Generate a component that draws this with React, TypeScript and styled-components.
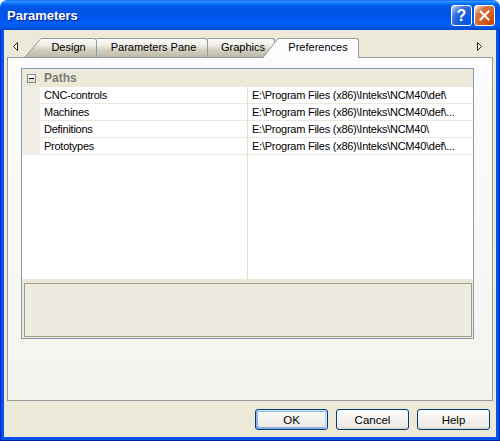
import React from 'react';
import styled, { createGlobalStyle } from 'styled-components';

const GlobalStyle = createGlobalStyle`
  html, body { margin: 0; padding: 0; background: #ffffff; }
  body { font-family: "Liberation Sans", Arial, sans-serif; font-size: 11px; color: #000; }
  * { box-sizing: border-box; }
`;

const Window = styled.div`
  width: 500px;
  height: 441px;
  display: flex;
  flex-direction: column;
`;

const TitleBar = styled.div`
  height: 30px;
  flex: none;
  display: flex;
  align-items: flex-start;
  padding: 5px 5px 0 7px;
  border-radius: 7px 7px 0 0;
  background: linear-gradient(
    to bottom,
    #0058ee 0px,
    #3593ff 1px,
    #288eff 2px,
    #127dff 3px,
    #036ffc 4px,
    #0262ee 5px,
    #0057e5 7px,
    #0054e3 9px,
    #0055eb 17px,
    #005af3 21px,
    #0060f5 24px,
    #0058e8 27px,
    #004ed8 29px,
    #0044c8 30px
  );
`;

const Title = styled.div`
  flex: 1;
  align-self: center;
  margin-top: -4px;
  color: #ffffff;
  font-family: "Liberation Sans", Arial, sans-serif;
  font-weight: bold;
  font-size: 13px;
  text-shadow: 1px 1px #0a1883;
`;

const CaptionButtons = styled.div`
  display: flex;
  gap: 2px;
`;

const CaptionButton = styled.div<{ $variant: 'help' | 'close' }>`
  width: 21px;
  height: 21px;
  border: 1px solid #ffffff;
  border-radius: 3px;
  display: flex;
  align-items: center;
  justify-content: center;
  color: #ffffff;
  font-family: "Liberation Sans", Arial, sans-serif;
  font-weight: bold;
  font-size: 16px;
  background: ${(p) =>
    p.$variant === 'help'
      ? 'radial-gradient(circle at 90% 90%, #0054e9 0%, #2263d5 55%, #4479e4 70%, #a3bbec 90%, #ffffff 100%)'
      : 'radial-gradient(circle at 90% 90%, #cc4600 0%, #dc6527 55%, #cd7546 70%, #ffccb2 90%, #ffffff 100%)'};
`;

const Frame = styled.div`
  flex: 1;
  display: flex;
  padding: 0 4px 4px 4px;
  background: #0055ea;
  box-shadow: inset 1px 0 #0019cf, inset -1px 0 #001ea0, inset 0 -1px #001ea0;
`;

const Body = styled.div`
  flex: 1;
  display: flex;
  flex-direction: column;
  background: #ece9d8;
`;

const TabStrip = styled.div`
  height: 27px;
  flex: none;
  display: flex;
  align-items: flex-end;
`;

const ScrollArrow = styled.svg<{ $side: 'left' | 'right' }>`
  flex: none;
  width: 5px;
  height: 9px;
  margin-bottom: 6px;
  margin-left: ${(p) => (p.$side === 'left' ? '9px' : 'auto')};
  margin-right: ${(p) => (p.$side === 'left' ? '7px' : '14px')};
`;

const inactiveFill =
  'linear-gradient(to bottom, #fbfbf9 0%, #efede6 35%, #d6d2c3 58%, #bdb9a8 100%)';

const Slant = styled.svg<{ $active?: boolean }>`
  flex: none;
  display: block;
  width: ${(p) => (p.$active ? '15px' : '16px')};
  height: ${(p) => (p.$active ? '20px' : '19px')};
  margin-left: ${(p) => (p.$active ? '-12px' : '0')};
  margin-bottom: ${(p) => (p.$active ? '-1px' : '0')};
  position: relative;
  z-index: ${(p) => (p.$active ? 2 : 0)};
`;

const Tab = styled.div<{ $active?: boolean; $width: number; $shift?: number }>`
  flex: none;
  width: ${(p) => p.$width}px;
  height: ${(p) => (p.$active ? '20px' : '19px')};
  margin-bottom: ${(p) => (p.$active ? '-1px' : '0')};
  padding-left: ${(p) => p.$shift ?? 0}px;
  border-top: 1px solid #919b9c;
  border-right: 1px solid #919b9c;
  border-top-right-radius: 3px;
  background: ${(p) => (p.$active ? '#fcfcfe' : inactiveFill)};
  position: relative;
  z-index: ${(p) => (p.$active ? 2 : 0)};
  display: flex;
  justify-content: center;
  line-height: 17px;
  white-space: nowrap;
  font-size: 11px;
`;

const Panel = styled.div`
  height: 344px;
  flex: none;
  margin: 0 3px;
  border: 1px solid #919b9c;
  background: linear-gradient(to bottom, #fcfcfe 0%, #f7f6f2 70%, #f4f3ee 100%);
  padding: 10px 18px 0 13px;
  position: relative;
  z-index: 1;
`;

const Grid = styled.div`
  height: 271px;
  border: 1px solid #7f9db9;
  background: #ffffff;
  display: flex;
  flex-direction: column;
`;

const GridBody = styled.div`
  flex: 1;
  display: flex;
  flex-direction: column;
`;

const CategoryRow = styled.div`
  height: 18px;
  flex: none;
  display: flex;
  align-items: center;
  background: #ece9d8;
  padding-left: 5px;
`;

const ExpandBox = styled.span`
  width: 9px;
  height: 9px;
  margin-top: 1px;
  border: 1px solid #7a8ea6;
  background: linear-gradient(to bottom, #ffffff, #dcd8cb);
  display: flex;
  align-items: center;
  justify-content: center;
  &::after {
    content: '';
    width: 5px;
    height: 1px;
    background: #000;
  }
`;

const CategoryLabel = styled.span`
  margin-left: 8px;
  font-weight: bold;
  font-size: 12px;
  color: #7c7c78;
`;

const columns = '18px 207px 1px 1fr';

const PropRow = styled.div`
  height: 17px;
  flex: none;
  display: grid;
  grid-template-columns: ${columns};
`;

const Margin = styled.div`
  background: #f1efe7;
`;

const Cell = styled.div`
  border-bottom: 1px solid #ebe8dc;
  padding-left: 4px;
  line-height: 16px;
  white-space: nowrap;
  overflow: hidden;
  font-size: 11px;
  letter-spacing: -0.25px;
`;

const Splitter = styled.div`
  background: #e2dfd1;
`;

const Filler = styled.div`
  flex: 1;
  display: grid;
  grid-template-columns: ${columns};
`;

const Blank = styled.div``;

const DescArea = styled.div`
  height: 59px;
  flex: none;
  background: #ece9d8;
  padding: 4px 1px 1px 2px;
  display: flex;
`;

const DescBox = styled.div`
  flex: 1;
  border: 1px solid #a19f8b;
  background: #edeadf;
`;

const ButtonRow = styled.div`
  display: flex;
  justify-content: flex-end;
  gap: 8px;
  padding: 8px 6px 7px 0;
`;

const Button = styled.div<{ $default?: boolean }>`
  width: 73px;
  height: 21px;
  border: 1px solid #003c74;
  border-radius: 3px;
  background: linear-gradient(to bottom, #ffffff 0%, #f7f6f2 30%, #ecebe6 86%, #d6d0c5 100%);
  display: flex;
  align-items: center;
  justify-content: center;
  font-size: 11.5px;
  color: #000;
  box-shadow: ${(p) =>
    p.$default
      ? 'inset -1px 1px #cee7ff, inset 1px 2px #98b8ea, inset -2px 0 #bcd4f6, inset 1px -1px #89ade4, inset 2px -2px #89ade4'
      : 'none'};
`;

const rows: { name: string; value: string }[] = [
  { name: 'CNC-controls', value: 'E:\\Program Files (x86)\\Inteks\\NCM40\\def\\' },
  { name: 'Machines', value: 'E:\\Program Files (x86)\\Inteks\\NCM40\\def\\...' },
  { name: 'Definitions', value: 'E:\\Program Files (x86)\\Inteks\\NCM40\\' },
  { name: 'Prototypes', value: 'E:\\Program Files (x86)\\Inteks\\NCM40\\def\\...' },
];

export default function App() {
  return (
    <>
      <GlobalStyle />
      <Window>
        <TitleBar>
          <Title>Parameters</Title>
          <CaptionButtons>
            <CaptionButton $variant="help">?</CaptionButton>
            <CaptionButton $variant="close">
              <svg width="11" height="11" viewBox="0 0 11 11">
                <path d="M1.5 1.5 L9.5 9.5 M9.5 1.5 L1.5 9.5" stroke="#fff" strokeWidth="2" strokeLinecap="square" />
              </svg>
            </CaptionButton>
          </CaptionButtons>
        </TitleBar>
        <Frame>
          <Body>
            <TabStrip>
              <ScrollArrow $side="left" viewBox="0 0 5 9">
                <polygon points="4.5,0.5 0.5,4.5 4.5,8.5" fill="#ffffff" stroke="#222" strokeWidth="1" />
              </ScrollArrow>
              <Slant viewBox="0 0 16 19">
                <defs>
                  <linearGradient id="tabg" x1="0" y1="0" x2="0" y2="1">
                    <stop offset="0" stopColor="#fbfbf9" />
                    <stop offset="0.35" stopColor="#efede6" />
                    <stop offset="0.58" stopColor="#d6d2c3" />
                    <stop offset="1" stopColor="#bdb9a8" />
                  </linearGradient>
                </defs>
                <polygon points="0,19 16,0 16,19" fill="url(#tabg)" />
                <line x1="0" y1="19" x2="16" y2="0.5" stroke="#919b9c" strokeWidth="1" />
              </Slant>
              <Tab $width={56}>Design</Tab>
              <Tab $width={111} $shift={3}>Parameters Pane</Tab>
              <Tab $width={67} $shift={4}>Graphics</Tab>
              <Slant $active viewBox="0 0 15 20">
                <polygon points="0,20 15,0 15,20" fill="#fcfcfe" />
                <line x1="0" y1="19.5" x2="15" y2="0.5" stroke="#919b9c" strokeWidth="1" />
              </Slant>
              <Tab $active $width={81}>Preferences</Tab>
              <ScrollArrow $side="right" viewBox="0 0 5 9">
                <polygon points="0.5,0.5 4.5,4.5 0.5,8.5" fill="#ffffff" stroke="#222" strokeWidth="1" />
              </ScrollArrow>
            </TabStrip>
            <Panel>
              <Grid>
                <GridBody>
                  <CategoryRow>
                    <ExpandBox />
                    <CategoryLabel>Paths</CategoryLabel>
                  </CategoryRow>
                  {rows.map((r) => (
                    <PropRow key={r.name}>
                      <Margin />
                      <Cell>{r.name}</Cell>
                      <Splitter />
                      <Cell>{r.value}</Cell>
                    </PropRow>
                  ))}
                  <Filler>
                    <Blank />
                    <Blank />
                    <Splitter />
                    <Blank />
                  </Filler>
                </GridBody>
                <DescArea>
                  <DescBox />
                </DescArea>
              </Grid>
            </Panel>
            <ButtonRow>
              <Button $default>OK</Button>
              <Button>Cancel</Button>
              <Button>Help</Button>
            </ButtonRow>
          </Body>
        </Frame>
      </Window>
    </>
  );
}
